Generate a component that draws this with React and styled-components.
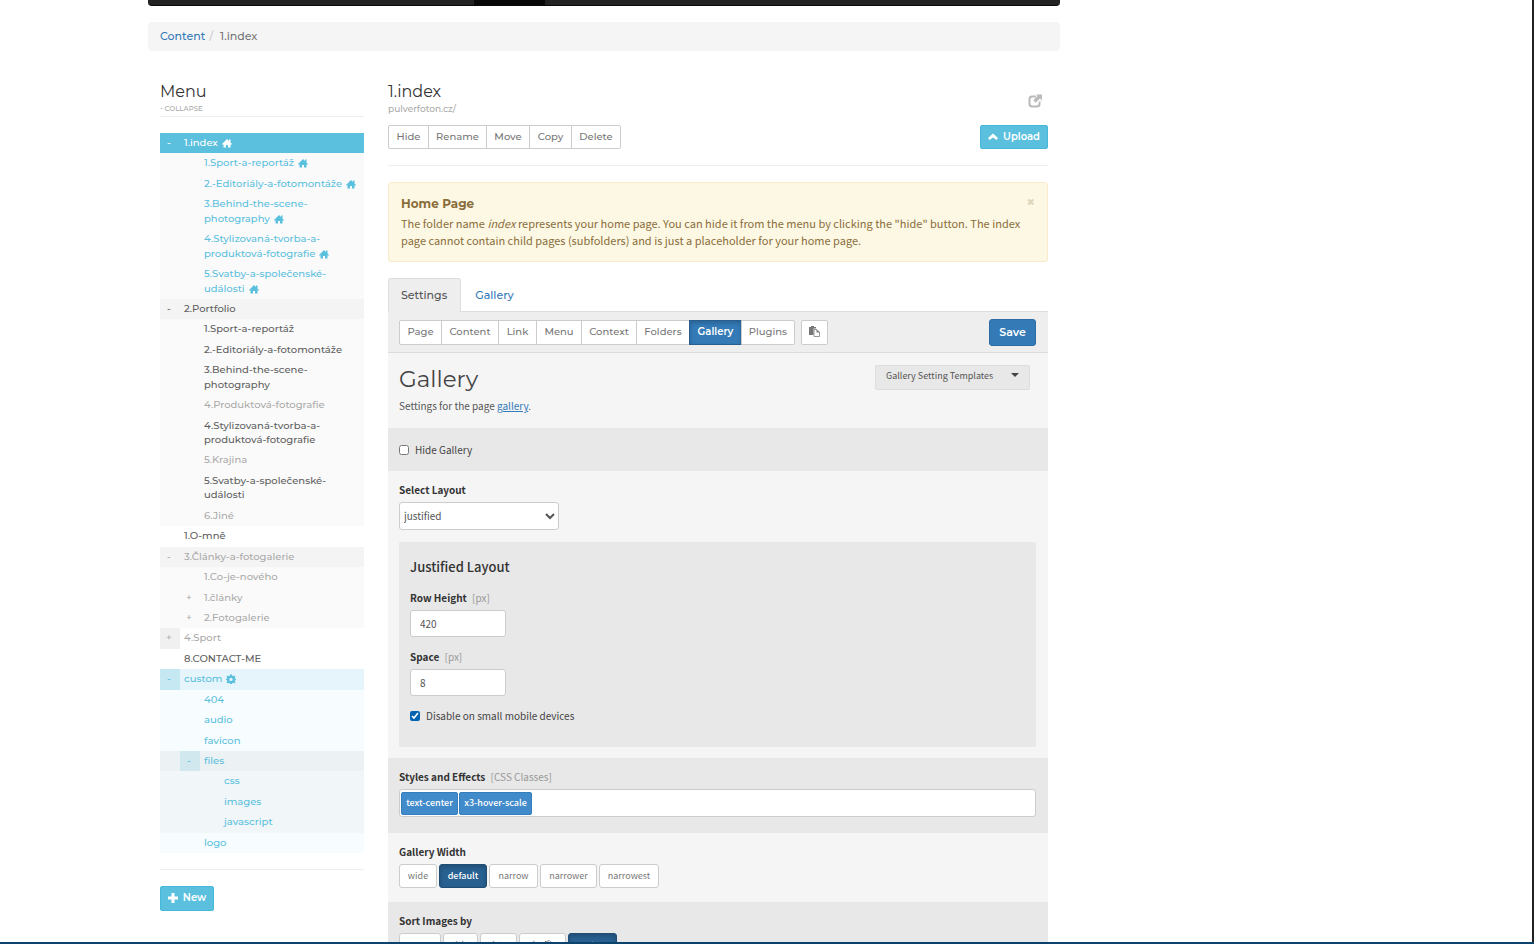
import React, { useState } from 'react';
import styled, { createGlobalStyle, css } from 'styled-components';

const heading = 'Montserrat, Inter, sans-serif';
const text = '"Source Sans Pro", "Noto Sans CJK SC", "Open Sans", sans-serif';

const Global = createGlobalStyle`
  *, *::before, *::after { box-sizing: border-box; }
  body { margin: 0; background: #fff; color: #555; font: 10px/16px ${text}; }
  button, input, select { font: inherit; color: inherit; margin: 0; }
  h1, h2, h3, h4, p, ul { margin: 0; padding: 0; font-weight: 400; }
  ul { list-style: none; }
  a { color: #337ab7; text-decoration: none; }
`;

const Frame = styled.div`
  height: 100vh;
  display: flex;
  border-bottom: 2px solid #0b436d;
`;
const Viewport = styled.div`
  flex: 1;
  overflow: hidden;
  border-right: 2px solid #222;
`;
const Container = styled.div`
  max-width: 912px;
  margin-left: 148px;
`;
const NavBar = styled.nav`
  display: flex;
  justify-content: flex-start;
  height: 6px;
  padding-left: 326px;
  background: #222;
  border-bottom: 1px solid #080808;
  border-radius: 0 0 4px 4px;
`;
const NavActive = styled.span`
  width: 71px;
  background: #080808;
`;
const Breadcrumb = styled.div`
  display: flex;
  margin-top: 16px;
  padding: 6px 12px 7px;
  background: #f5f5f5;
  border-radius: 4px;
  font: 500 11px/16px ${heading};
  color: #777;
`;
const Slash = styled.span`
  padding: 0 7px 0 4px;
  color: #ccc;
`;
const Columns = styled.div`
  display: grid;
  grid-template-columns: 204px 1fr;
  gap: 24px;
  padding: 31px 12px 0;
  align-items: start;
`;
const Title = styled.h2`
  font: 400 16px/19px ${heading};
  color: #333;
`;
const Sub = styled.div`
  font: 500 ${p => (p.$small ? '7px/15px' : '9px/16px')} ${heading};
  color: #aaa;
`;
const Rule = styled.hr`
  margin: ${p => p.$m || '0'};
  border: 0;
  border-top: 1px solid #eee;
`;

const Tree = styled.ul`
  font: 500 10px/1.444 ${heading};
`;
const tones = {
  normal: '#606060',
  hidden: '#aaa',
  blue: '#5bc0de',
  white: '#fff',
};
const Row = styled.li`
  display: flex;
  background: ${p => p.$bg};
  color: ${p => tones[p.$tone]};
  padding-left: ${p => (p.$depth - 1) * 20}px;
`;
const Toggle = styled.button`
  width: 20px;
  flex: none;
  border: 0;
  padding: 0 2px 0 0;
  background: ${p => p.$bg || 'transparent'};
`;
const RowLink = styled.a`
  padding: 3px 3px 3px 4px;
  color: inherit;
  svg { margin-left: 4px; vertical-align: -2px; }
`;

const Button = styled.button`
  height: ${p => (p.$tall ? 25 : 24)}px;
  width: ${p => (p.$w ? `${p.$w}px` : 'auto')};
  padding: 0 0 1px;
  border: 1px solid #ccc;
  border-radius: 2px;
  background: #fff;
  color: #777;
  font: 500 10px/20px ${heading};
  white-space: nowrap;
  display: inline-flex;
  align-items: center;
  justify-content: center;
  gap: 5px;
  svg { flex: none; }
  ${p => p.$kind === 'info' && css`
    background: #5bc0de; border-color: #46b8da; color: #fff; font-weight: 600;
  `}
  ${p => p.$kind === 'primary' && css`
    height: 27px; background: #337ab7; border-color: #2e6da4; border-radius: 3px; color: #fff; font-weight: 600; font-size: 11px;
  `}
  ${p => p.$kind === 'current' && css`
    background: #337ab7; border-color: #285e8e; color: #fff; font-weight: 600;
    box-shadow: inset 0 2px 4px rgba(0, 0, 0, 0.2);
  `}
`;
const Group = styled.div`
  display: flex;
  > button { border-radius: 0; }
  > button + button { margin-left: -1px; }
  > button:first-child { border-radius: 2px 0 0 2px; }
  > button:last-child { border-radius: 0 2px 2px 0; }
`;
const Header = styled.header`
  display: flex;
  justify-content: space-between;
`;
const IconLink = styled.a`
  color: #bbb;
  padding: 12px 6px 0 0;
  svg { display: block; }
`;
const Actions = styled.div`
  display: flex;
  justify-content: space-between;
  margin-top: 8px;
`;
const Alert = styled.section`
  display: flex;
  justify-content: space-between;
  align-items: flex-start;
  padding: 12px;
  background: #fcf8e3;
  border: 1px solid #faebcc;
  border-radius: 3px;
  color: #8a6d3b;
  font: 11px/17px ${text};
`;
const AlertTitle = styled.h4`
  font: 700 12px/17px ${heading};
  margin-bottom: 3px;
`;
const Close = styled.button`
  padding: 0;
  border: 0;
  background: none;
  color: #ddd6bd;
  font: 800 14px/14px ${heading};
`;
const Tabs = styled.div`
  display: flex;
  align-items: flex-start;
  gap: 1px;
  height: 33px;
  margin-top: 16px;
`;
const Tab = styled.button`
  height: 34px;
  padding: 0 13px 0 12px;
  border: 1px solid ${p => (p.$on ? '#ddd' : 'transparent')};
  border-bottom: 0;
  border-radius: 3px 3px 0 0;
  background: ${p => (p.$on ? '#eee' : 'transparent')};
  color: ${p => (p.$on ? '#555' : '#337ab7')};
  font: 500 11px/17px ${heading};
  position: relative;
`;
const Toolbar = styled.div`
  display: flex;
  align-items: center;
  gap: 6px;
  height: 42px;
  padding: 0 12px 0 11px;
  background: #eee;
  border-top: 1px solid #ddd;
  border-bottom: 1px solid #ddd;
  > :last-child { margin-left: auto; }
`;
const Intro = styled.section`
  display: flex;
  justify-content: space-between;
  height: 75px;
  padding: 12px 18px 0 11px;
  background: #f5f5f5;
`;
const PageTitle = styled.h1`
  font: 400 23px/28px ${heading};
  color: #444;
  margin-bottom: 5px;
`;
const Underlined = styled.a`
  text-decoration: underline;
`;
const TemplatePicker = styled.div`
  position: relative;
  height: 25px;
  svg { position: absolute; right: 11px; top: 8px; pointer-events: none; }
`;
const TemplateSelect = styled.select`
  appearance: none;
  width: 155px;
  height: 25px;
  padding: 0 10px 4px;
  border: 1px solid #ddd;
  border-radius: 2px;
  background: #e8e8e8;
  color: #555;
  font: 9px/16px ${text};
`;
const Section = styled.section`
  padding: ${p => p.$pad || '11px 12px 16px 11px'};
  background: ${p => (p.$dark ? '#e8e8e8' : '#f5f5f5')};
`;
const CheckLabel = styled.label`
  display: flex;
  align-items: center;
  gap: 6px;
  color: #444;
  input { width: 10px; height: 10px; accent-color: #0063b1; }
`;
const Label = styled.label`
  display: block;
  margin-bottom: 4px;
  color: #333;
  font: 600 10px/16px ${text};
  small { margin-left: 3px; font-size: 10px; font-weight: 400; color: #999; }
`;
const Select = styled.select`
  width: 160px;
  height: 28px;
  padding: 0 0 1px;
  border: 1px solid #ccc;
  border-radius: 3px;
  background: #fff;
  color: #555;
`;
const Well = styled.div`
  margin-top: 12px;
  padding: 15px 11px 23px;
  border-radius: 2px;
  background: #e8e8e8;
`;
const WellTitle = styled.h3`
  font: 500 13px/20px ${text};
  color: #333;
  margin-bottom: 13px;
`;
const NumberInput = styled.input`
  display: block;
  width: 96px;
  height: 27px;
  margin-bottom: 12px;
  padding: 0 9px 1px;
  border: 1px solid #ccc;
  border-radius: 3px;
  background: #fff;
`;
const TagBox = styled.div`
  display: flex;
  gap: 1px;
  height: 28px;
  padding: 2px 1px;
  border: 1px solid #ccc;
  border-radius: 3px;
  background: #fff;
`;
const Tag = styled.span`
  height: 23px;
  width: ${p => p.$w}px;
  text-align: center;
  border: 1px solid #357ebd;
  border-radius: 2px;
  background: #428bca;
  color: #fff;
  font: 500 9px/20px ${text};
`;
const TagInput = styled.input`
  flex: 1;
  min-width: 0;
  border: 0;
  outline: 0;
  background: transparent;
`;
const Choices = styled.div`
  display: flex;
  gap: 2px;
`;
const Choice = styled.button`
  height: 24px;
  width: ${p => p.$w}px;
  padding: 0 0 1px;
  border: 1px solid ${p => (p.$on ? '#204d74' : '#ccc')};
  border-radius: 3px;
  background: ${p => (p.$on ? '#286090' : '#fff')};
  color: ${p => (p.$on ? '#fff' : '#777')};
  box-shadow: ${p => (p.$on ? 'inset 0 2px 4px rgba(0, 0, 0, 0.2)' : 'none')};
  font: ${p => (p.$on ? 500 : 400)} 9px/16px ${text};
`;

const Svg = ({ s = 10, box = 20, children, ...rest }) => (
  <svg width={s} height={s} viewBox={`0 0 ${box} ${box}`} fill="currentColor" aria-hidden="true" {...rest}>{children}</svg>
);
const Home = () => <Svg><path d="M10 2 0 12l1.500 1.500L3 12.500V19h5v-5h4v5h5v-6.500l1.500 1L20 12l-3-3V3h-3v3z" /></Svg>;
const Gear = () => (
  <Svg><path fillRule="evenodd" d="M8 1h4l.5 2.6 1.6.7L16.400 3 19 5.600 17.500 7.900l.6 1.600 1.900.5v2l-2 .600-.6 1.600L19 16.400 16.400 19l-2.300-1.500-1.600.7L12 20H8l-.5-1.800-1.600-.7L3.600 19 1 16.400l1.500-2.200-.6-1.600L0 12v-2l1.900-.5.6-1.600L1 5.600 3.600 3l2.300 1.300 1.600-.7zM10 7.500a3.300 3.300 0 1 0 0 6.600 3.300 3.300 0 0 0 0-6.600z" /></Svg>
);
const Plus = () => <Svg><path d="M7 0h6v7h7v6h-7v7H7v-7H0V7h7z" /></Svg>;
const ChevronUp = () => <Svg><path d="m10 3 10 9-3 4-7-5-7 5-3-4z" /></Svg>;
const External = () => (
  <Svg s={14} box={28}><path d="M16 3v4H9a4 4 0 0 0-4 4v8a4 4 0 0 0 4 4h8a4 4 0 0 0 4-4v-2l4-4v7a7 7 0 0 1-7 7H8a7 7 0 0 1-7-7V10a7 7 0 0 1 7-7z" /><path d="M16 1h12v12l-4-4-8.500 8.500-5-5L19 4z" /></Svg>
);
const Paste = () => (
  <Svg s={11} box={22}><path d="M0 2h4V0h6v2h4v3H9v13H0z" /><path d="M10 7h6l5 5v9H10z" fill="#fff" stroke="currentColor" strokeWidth="1.500" /><path d="M15 7v6h6z" /></Svg>
);
const Caret = () => <svg width="8" height="4" viewBox="0 0 8 4" fill="#444" aria-hidden="true"><path d="M0 0h8L4 4z" /></svg>;

const light = '#fafafa';
const items = [
  ['1.index', 1, 'white', '#5bc0de', '-', 'home'],
  ['1.Sport-a-reportáž', 2, 'blue', light, '', 'home'],
  ['2.-Editoriály-a-fotomontáže', 2, 'blue', light, '', 'home'],
  ['3.Behind-the-scene-photography', 2, 'blue', light, '', 'home'],
  ['4.Stylizovaná-tvorba-a-produktová-fotografie', 2, 'blue', light, '', 'home'],
  ['5.Svatby-a-společenské-události', 2, 'blue', light, '', 'home'],
  ['2.Portfolio', 1, 'normal', '#f4f4f4', '-'],
  ['1.Sport-a-reportáž', 2, 'normal', light],
  ['2.-Editoriály-a-fotomontáže', 2, 'normal', light],
  ['3.Behind-the-scene-photography', 2, 'normal', light],
  ['4.Produktová-fotografie', 2, 'hidden', light],
  ['4.Stylizovaná-tvorba-a-produktová-fotografie', 2, 'normal', light],
  ['5.Krajina', 2, 'hidden', light],
  ['5.Svatby-a-společenské-události', 2, 'normal', light],
  ['6.Jiné', 2, 'hidden', light],
  ['1.O-mně', 1, 'normal', '#fff'],
  ['3.Články-a-fotogalerie', 1, 'hidden', '#f4f4f4', '-'],
  ['1.Co-je-nového', 2, 'hidden', light],
  ['1.články', 2, 'hidden', light, '+'],
  ['2.Fotogalerie', 2, 'hidden', light, '+'],
  ['4.Sport', 1, 'hidden', '#fff', '+', '', '#f0f0f0'],
  ['8.CONTACT-ME', 1, 'normal', '#fff'],
  ['custom', 1, 'blue', '#e6f5fb', '-', 'gear', '#c6e8f2'],
  ['404', 2, 'blue', '#f7fdfe'],
  ['audio', 2, 'blue', '#f7fdfe'],
  ['favicon', 2, 'blue', '#f7fdfe'],
  ['files', 2, 'blue', '#ecf2f3', '-', '', '#d0e8ee'],
  ['css', 3, 'blue', '#f1f7f8'],
  ['images', 3, 'blue', '#f1f7f8'],
  ['javascript', 3, 'blue', '#f1f7f8'],
  ['logo', 2, 'blue', '#f7fdfe'],
];

const Spacer = styled.span`
  width: 20px;
  flex: none;
`;

function TreeItem({ item }) {
  const [name, depth, tone, bg, sign, icon, toggleBg] = item;
  return (
    <Row $depth={depth} $tone={tone} $bg={bg}>
      {sign ? <Toggle $bg={toggleBg}>{sign}</Toggle> : <Spacer />}
      <RowLink href="#">
        {name}
        {icon === 'home' && <Home />}
        {icon === 'gear' && <Gear />}
      </RowLink>
    </Row>
  );
}

export default function App() {
  const [hide, setHide] = useState(false);
  const [disable, setDisable] = useState(true);
  return (
    <>
      <Global />
      <Frame>
        <Viewport>
          <Container>
            <NavBar><NavActive /></NavBar>
            <Breadcrumb><a href="#">Content</a><Slash>/</Slash><span>1.index</span></Breadcrumb>
            <Columns>
              <aside>
                <Title>Menu</Title>
                <Sub $small>- COLLAPSE</Sub>
                <Rule $m="0 0 16px" />
                <Tree>{items.map((item, i) => <TreeItem key={i} item={item} />)}</Tree>
                <Rule $m="16px 0" />
                <Button $kind="info" $tall $w={54}><Plus />New</Button>
              </aside>
              <main>
                <Header>
                  <div>
                    <Title>1.index</Title>
                    <Sub>pulverfoton.cz/</Sub>
                  </div>
                  <IconLink href="#" aria-label="Open page"><External /></IconLink>
                </Header>
                <Actions>
                  <Group>
                    <Button $w={41}>Hide</Button>
                    <Button $w={59}>Rename</Button>
                    <Button $w={44}>Move</Button>
                    <Button $w={43}>Copy</Button>
                    <Button $w={50}>Delete</Button>
                  </Group>
                  <Button $kind="info" $w={68}><ChevronUp />Upload</Button>
                </Actions>
                <Rule $m="16px 0" />
                <Alert>
                  <div>
                    <AlertTitle>Home Page</AlertTitle>
                    <p>The folder name <em>index</em> represents your home page. You can hide it from the menu by clicking the "hide" button. The index page cannot contain child pages (subfolders) and is just a placeholder for your home page.</p>
                  </div>
                  <Close aria-label="Close">×</Close>
                </Alert>
                <Tabs>
                  <Tab $on>Settings</Tab>
                  <Tab>Gallery</Tab>
                </Tabs>
                <Toolbar>
                  <Group>
                    <Button $tall $w={43}>Page</Button>
                    <Button $tall $w={58}>Content</Button>
                    <Button $tall $w={39}>Link</Button>
                    <Button $tall $w={46}>Menu</Button>
                    <Button $tall $w={56}>Context</Button>
                    <Button $tall $w={54}>Folders</Button>
                    <Button $tall $w={53} $kind="current">Gallery</Button>
                    <Button $tall $w={54}>Plugins</Button>
                  </Group>
                  <Button $tall $w={27} aria-label="Paste"><Paste /></Button>
                  <Button $kind="primary" $w={47}>Save</Button>
                </Toolbar>
                <Intro>
                  <div>
                    <PageTitle>Gallery</PageTitle>
                    <p>Settings for the page <Underlined href="#">gallery</Underlined>.</p>
                  </div>
                  <TemplatePicker>
                    <TemplateSelect aria-label="Gallery Setting Templates">
                      <option>Gallery Setting Templates</option>
                    </TemplateSelect>
                    <Caret />
                  </TemplatePicker>
                </Intro>
                <Section $dark $pad="14px 12px 13px 11px">
                  <CheckLabel><input type="checkbox" checked={hide} onChange={e => setHide(e.target.checked)} />Hide Gallery</CheckLabel>
                </Section>
                <Section $pad="11px 12px 11px 11px">
                  <Label htmlFor="layout">Select Layout</Label>
                  <Select id="layout"><option>justified</option></Select>
                  <Well>
                    <WellTitle>Justified Layout</WellTitle>
                    <Label htmlFor="height">Row Height <small>[px]</small></Label>
                    <NumberInput id="height" defaultValue="420" />
                    <Label htmlFor="space">Space <small>[px]</small></Label>
                    <NumberInput id="space" defaultValue="8" />
                    <CheckLabel><input type="checkbox" checked={disable} onChange={e => setDisable(e.target.checked)} />Disable on small mobile devices</CheckLabel>
                  </Well>
                </Section>
                <Section $dark>
                  <Label htmlFor="classes">Styles and Effects <small>[CSS Classes]</small></Label>
                  <TagBox>
                    <Tag $w={57}>text-center</Tag>
                    <Tag $w={73}>x3-hover-scale</Tag>
                    <TagInput id="classes" />
                  </TagBox>
                </Section>
                <Section $pad="11px 12px 14px 11px">
                  <Label as="div">Gallery Width</Label>
                  <Choices>
                    <Choice $w={38}>wide</Choice>
                    <Choice $w={48} $on>default</Choice>
                    <Choice $w={49}>narrow</Choice>
                    <Choice $w={57}>narrower</Choice>
                    <Choice $w={60}>narrowest</Choice>
                  </Choices>
                </Section>
                <Section $dark>
                  <Label as="div">Sort Images by</Label>
                  <Choices>
                    <Choice $w={42}>name</Choice>
                    <Choice $w={35}>title</Choice>
                    <Choice $w={37}>date</Choice>
                    <Choice $w={47}>shuffle</Choice>
                    <Choice $w={49} $on>custom</Choice>
                  </Choices>
                </Section>
              </main>
            </Columns>
          </Container>
        </Viewport>
      </Frame>
    </>
  );
}
